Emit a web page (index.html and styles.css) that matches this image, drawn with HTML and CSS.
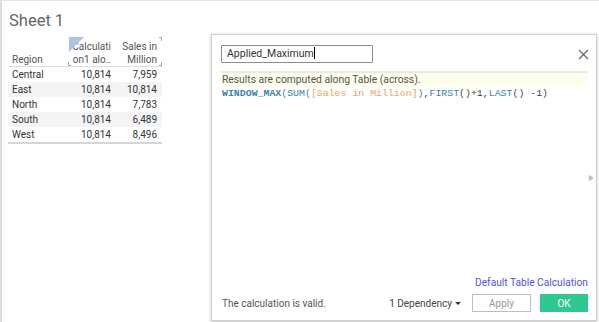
FILE: index.html
```html
<!DOCTYPE html>
<html>
<head>
<meta charset="utf-8">
<link rel="stylesheet" href="styles.css">
</head>
<body>
<div class="page">
  <section class="sheet">
    <h1 class="title">Sheet 1</h1>
    <div class="table">
      <div class="thead">
        <div class="th th-region">Region</div>
        <div class="th th-num th-sel">Calculati<br>on1 alo..<span class="tri"></span><span class="br br-bl"></span></div>
        <div class="th th-num th-sel2">Sales in<br>Million<span class="br br-tr"></span><span class="br br-br"></span></div>
      </div>
      <div class="tr"><div class="td">Central</div><div class="td num">10,814</div><div class="td num">7,959</div></div>
      <div class="tr alt"><div class="td">East</div><div class="td num">10,814</div><div class="td num">10,814</div></div>
      <div class="tr"><div class="td">North</div><div class="td num">10,814</div><div class="td num">7,783</div></div>
      <div class="tr alt"><div class="td">South</div><div class="td num">10,814</div><div class="td num">6,489</div></div>
      <div class="tr"><div class="td">West</div><div class="td num">10,814</div><div class="td num">8,496</div></div>
    </div>
  </section>
  <div class="dialog">
    <div class="dlg-head">
      <div class="name-input">Applied_Maximum<span class="caret"></span></div>
      <svg class="close" width="11" height="11" viewBox="0 0 11 11"><path d="M1 1L10 10M10 1L1 10" stroke="#666" stroke-width="1.2" fill="none"/></svg>
    </div>
    <div class="editor">
      <div class="info">Results are computed along Table (across).</div>
      <div class="code"><b class="fn">WINDOW_MAX</b><span class="fn">(SUM(</span><span class="fld">[Sales in Million]</span><span class="fn">)</span><span class="op">,</span><span class="fn">FIRST</span><span class="op">()+1,</span><span class="fn">LAST</span><span class="op">() -1)</span></div>
    </div>
    <div class="link-row"><span class="link">Default Table Calculation</span></div>
    <div class="footer">
      <span class="status">The calculation is valid.</span>
      <span class="dep">1 Dependency<span class="caret-down"></span></span>
      <span class="btn btn-apply">Apply</span>
      <span class="btn btn-ok">OK</span>
    </div>
    <span class="side-arrow"></span>
  </div>
</div>
</body>
</html>
```
FILE: styles.css
```css
html, body {
  margin: 0;
  padding: 0;
  background: #fff;
}
body {
  font-family: Roboto, "Liberation Sans", Arial, sans-serif;
  color: #333;
}
.page {
  display: flex;
  width: 599px;
  height: 322px;
  box-sizing: border-box;
  border-left: 2px solid #dcdcdc;
  border-top: 1px solid #e4e4e4;
  overflow: hidden;
}
.sheet {
  width: 209px;
  flex: none;
  padding-top: 10px;
}
.title {
  margin: 0 0 6px 7px;
  font-size: 16.5px;
  line-height: 20px;
  font-weight: 400;
  color: #666;
}
.table {
  margin-left: 6px;
  width: 154px;
  font-size: 10px;
  color: #333;
}
.thead {
  display: grid;
  grid-template-columns: 60px 47px 47px;
  height: 29px;
  border-bottom: 1px solid #dedede;
  align-items: end;
}
.th {
  line-height: 13px;
  color: #555;
  padding: 0 4px;
  position: relative;
}
.th-num {
  text-align: right;
  height: 29px;
  display: flex;
  flex-direction: column;
  justify-content: flex-end;
  box-sizing: border-box;
}
.th-sel { padding-right: 4px; }
.th-sel2 { padding-right: 5px; }
.tri {
  position: absolute;
  left: 1px;
  top: 0;
  width: 0;
  height: 0;
  border-top: 15px solid #a9c6e2;
  border-right: 15px solid transparent;
}
.br {
  position: absolute;
  width: 2px;
  height: 3px;
  border-color: #8fb3d8;
  border-style: solid;
  border-width: 0;
}
.br-bl { left: 0; bottom: 0; border-left-width: 1px; border-bottom-width: 1px; }
.br-tr { right: 0; top: 0; border-right-width: 1px; border-top-width: 1px; }
.br-br { right: 0; bottom: 0; border-right-width: 1px; border-bottom-width: 1px; }
.tr {
  display: grid;
  grid-template-columns: 60px 47px 47px;
  line-height: 15px;
  height: 15px;
}
.tr.alt { background: #f4f4f4; }
.tr:last-child { border-bottom: 2px solid #d6d6d6; }
.td { padding: 0 4px; }
.td.num { text-align: right; }
.tr .td:last-child { padding-right: 5px; }

.dialog {
  margin-top: 33px;
  width: 386px;
  height: 287px;
  box-sizing: border-box;
  border: 1px solid #d0d0d0;
  box-shadow: 0 1px 3px rgba(0,0,0,0.25);
  padding: 10px 8px 8px 9px;
  display: flex;
  flex-direction: column;
  position: relative;
  background: #fff;
}
.dlg-head {
  display: flex;
  align-items: center;
  justify-content: space-between;
  height: 18px;
}
.name-input {
  width: 152px;
  height: 18px;
  box-sizing: border-box;
  border: 1px solid #8c8c8c;
  border-radius: 1px;
  font-size: 10.5px;
  line-height: 16px;
  padding-left: 5px;
  color: #333;
}
.caret {
  display: inline-block;
  width: 1px;
  height: 12px;
  background: #000;
  vertical-align: -2px;
}
.close { margin-right: -1px; }
.editor {
  margin-top: 8px;
  border-top: 2px solid #e8e8e8;
}
.info {
  background: #fdfdeb;
  font-size: 10.3px;
  line-height: 14px;
  color: #555;
  padding-left: 1px;
}
.code {
  font-family: "Liberation Mono", "DejaVu Sans Mono", monospace;
  font-size: 9.9px;
  line-height: 13px;
  padding-left: 1px;
  white-space: pre;
}
.fn { color: #3b7fae; }
b.fn { font-weight: 700; }
.fld { color: #f0a25a; }
.op { color: #444; }
.link-row {
  margin-top: auto;
  text-align: right;
  line-height: 14px;
  font-size: 10.2px;
}
.link { color: #5252dc; }
.footer {
  margin-top: 4px;
  display: flex;
  align-items: center;
  height: 18px;
  font-size: 10px;
}
.status { color: #555; padding-left: 1px; }
.dep {
  margin-left: auto;
  color: #444;
  margin-right: 11px;
  display: flex;
  align-items: center;
}
.caret-down {
  display: inline-block;
  margin-left: 3px;
  width: 0;
  height: 0;
  border-left: 3px solid transparent;
  border-right: 3px solid transparent;
  border-top: 3px solid #333;
}
.btn {
  height: 18px;
  box-sizing: border-box;
  display: flex;
  align-items: center;
  justify-content: center;
}
.btn-apply {
  width: 59px;
  border: 1px solid #bdbdbd;
  color: #999;
  background: #fff;
}
.btn-ok {
  width: 48px;
  margin-left: 9px;
  background: #2fc890;
  color: #fff;
}
.side-arrow {
  position: absolute;
  right: 2px;
  top: 140px;
  width: 0;
  height: 0;
  border-top: 3px solid transparent;
  border-bottom: 3px solid transparent;
  border-left: 5px solid #bbb;
}
```
